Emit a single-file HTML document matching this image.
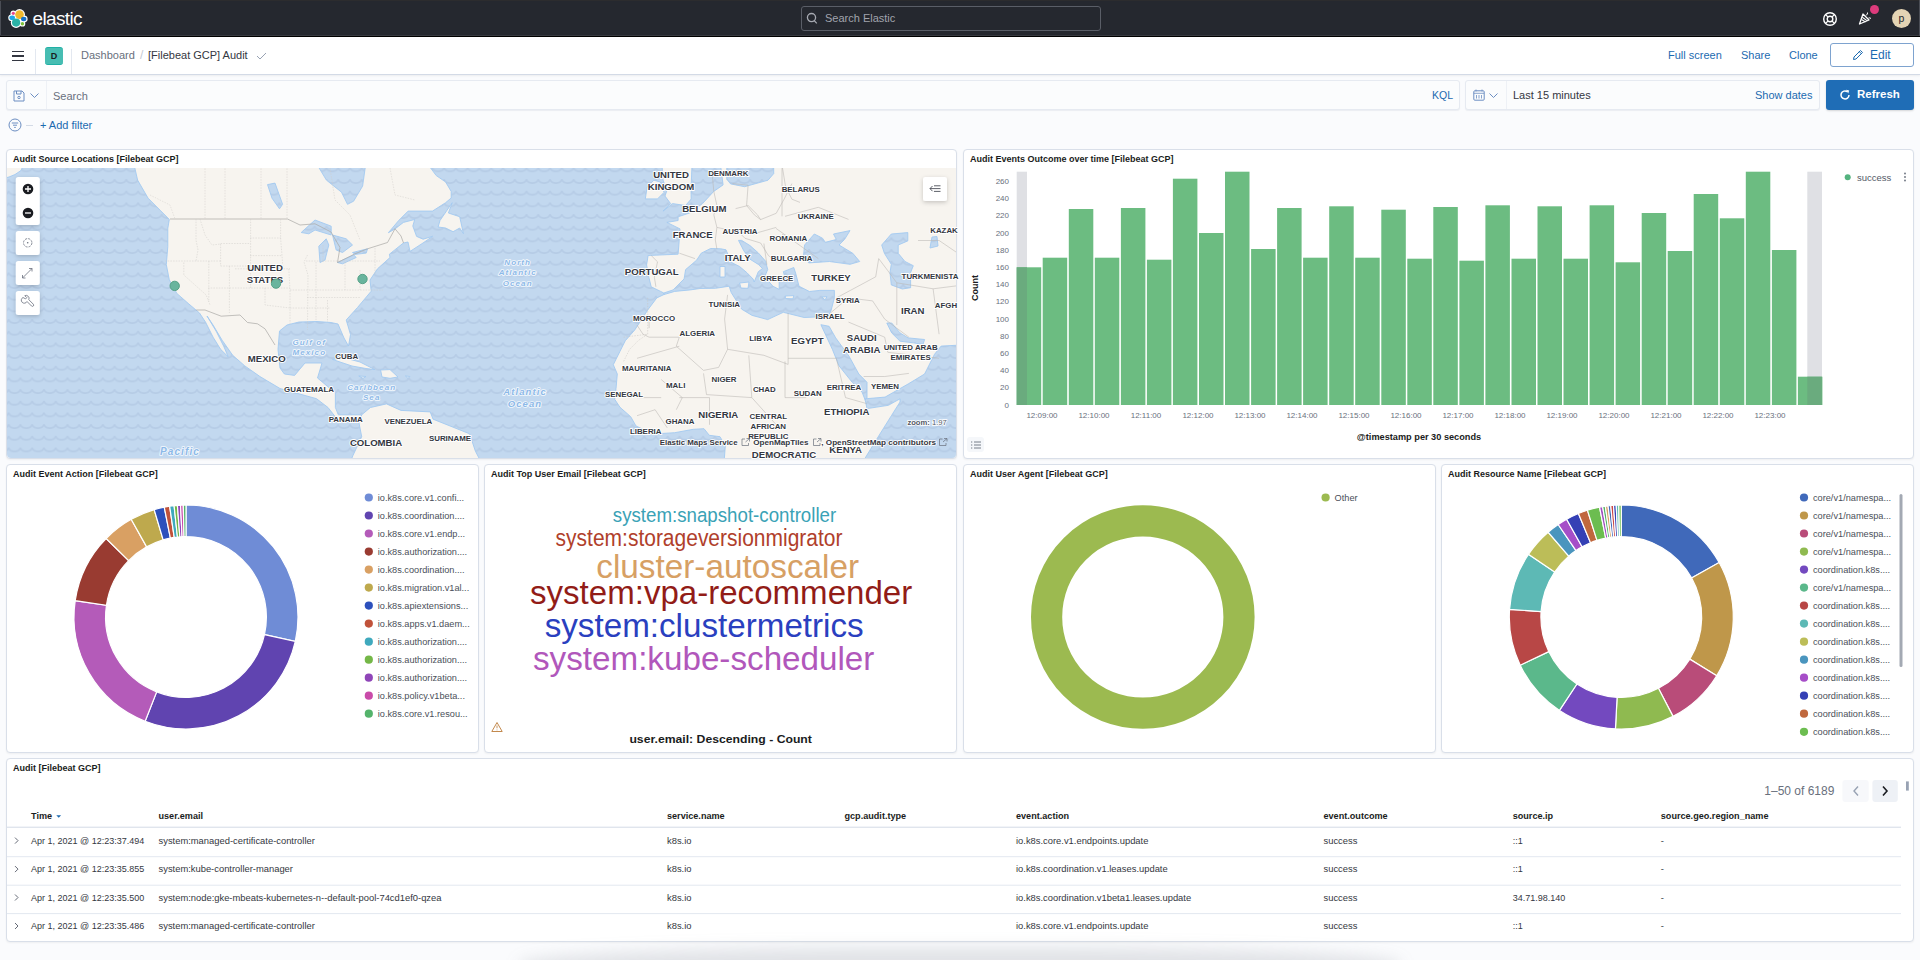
<!DOCTYPE html>
<html><head><meta charset="utf-8">
<style>
*{box-sizing:border-box;margin:0;padding:0}
html,body{width:1920px;height:960px;overflow:hidden;background:#fafbfd;font-family:"Liberation Sans",sans-serif;color:#343741;position:relative}
.abs{position:absolute}
.hdr{position:absolute;left:0;top:0;width:1920px;height:37px;background:#25282f;border-bottom:1px solid #000}
.nav{position:absolute;left:0;top:37px;width:1920px;height:38px;background:#fff;border-bottom:1px solid #d3dae6;box-shadow:0 1px 2px rgba(0,0,0,.06)}
.t{position:absolute;white-space:nowrap;line-height:1}
.link{color:#1c6ab0}
.panel{position:absolute;background:#fff;border:1px solid #d9dfe9;border-radius:4px;box-shadow:0 1px 2px rgba(0,0,0,.05)}
.ptitle{position:absolute;left:6px;top:5px;font-weight:bold;font-size:9px;color:#1a1c21;white-space:nowrap;line-height:1}
</style></head>
<body>
<!-- top header -->
<div class="hdr">
  <div class="abs" style="left:0;top:0;width:1px;height:36px;background:#4a4d55"></div>
  <div class="abs" style="left:0;top:0;width:1920px;height:1px;background:#2c2c2e"></div>
  <div class="abs" style="left:0;top:35px;width:1920px;height:1px;background:#383a40"></div>
  <svg class="abs" style="left:7px;top:7px" width="22" height="22" viewBox="0 0 22 22"><ellipse cx="12.5" cy="7.6" rx="5.5" ry="5.5" fill="#fff"/><ellipse cx="6.3" cy="6.3" rx="2.8" ry="2.8" fill="#fff"/><ellipse cx="5.2" cy="10.7" rx="4.0" ry="3.5" fill="#fff"/><ellipse cx="9.1" cy="15.6" rx="5.3" ry="5.3" fill="#fff"/><ellipse cx="16.7" cy="12.0" rx="3.9" ry="3.4" fill="#fff"/><ellipse cx="15.4" cy="16.7" rx="2.9" ry="2.9" fill="#fff"/><ellipse cx="12.5" cy="7.6" rx="4.3" ry="4.3" fill="#f0b92d"/><ellipse cx="6.3" cy="6.3" rx="1.6" ry="1.6" fill="#e8478b"/><ellipse cx="5.2" cy="10.7" rx="2.8" ry="2.3" fill="#1ea6e8"/><ellipse cx="9.1" cy="15.6" rx="4.1" ry="4.1" fill="#2bb3a6"/><ellipse cx="16.7" cy="12.0" rx="2.7" ry="2.2" fill="#1371c9"/><ellipse cx="15.4" cy="16.7" rx="1.7" ry="1.7" fill="#7bc038"/></svg>
  <div class="t" style="left:32.5px;top:9px;font-size:19px;color:#fff;letter-spacing:-0.65px">elastic</div>
  <div class="abs" style="left:801px;top:6px;width:300px;height:25px;border:1px solid #5a5e67;border-radius:3px;background:#25282f"></div>
  <svg class="abs" style="left:806px;top:12px" width="12" height="13" viewBox="0 0 12 13"><circle cx="5.5" cy="5.6" r="4.1" fill="none" stroke="#a7aab2" stroke-width="1.3"/><path d="M8.2 8.6 L10.8 11.4" stroke="#a7aab2" stroke-width="1.3"/></svg>
  <div class="t" style="left:825px;top:13px;font-size:11px;color:#a1a4ad">Search Elastic</div>
  <svg class="abs" style="left:1822px;top:11px" width="16" height="16" viewBox="0 0 16 16"><circle cx="8" cy="8" r="6.3" fill="none" stroke="#fff" stroke-width="1.4"/><circle cx="8" cy="8" r="2.8" fill="none" stroke="#fff" stroke-width="1.4"/><path d="M3.6 3.6L6 6M12.4 3.6L10 6M3.6 12.4L6 10M12.4 12.4L10 10" stroke="#fff" stroke-width="1.2"/></svg>
  <svg class="abs" style="left:1857px;top:10px" width="16" height="16" viewBox="0 0 16 16"><path d="M2.5 14 L6 4 L12 10 Z" fill="none" stroke="#fff" stroke-width="1.3" stroke-linejoin="round"/><path d="M4.5 9.5 L8.5 12 M5.3 7.2 L10 10.6" stroke="#fff" stroke-width="1.1"/><path d="M9 5.5 Q11 4 10.5 2.5 M11.5 8 Q13 7.5 14 8.5" fill="none" stroke="#fff" stroke-width="1"/></svg>
  <div class="abs" style="left:1870px;top:5px;width:9px;height:9px;border-radius:50%;background:#dd3b7c"></div>
  <div class="abs" style="left:1892px;top:9px;width:19px;height:19px;border-radius:50%;background:#e4d4b4;color:#25282f;font-size:10.5px;text-align:center;line-height:18px">p</div>
  <div class="abs" style="left:1919px;top:0;width:1px;height:36px;background:#4a4d55"></div>
</div>
<!-- nav -->
<div class="nav">
  <div class="abs" style="left:12px;top:14px;width:12px;height:1.3px;background:#343741"></div>
  <div class="abs" style="left:12px;top:18.3px;width:12px;height:1.3px;background:#343741"></div>
  <div class="abs" style="left:12px;top:22.6px;width:12px;height:1.3px;background:#343741"></div>
  <div class="abs" style="left:35px;top:12px;width:1px;height:25px;background:#e3e8f0"></div>
  <div class="abs" style="left:71px;top:12px;width:1px;height:25px;background:#e3e8f0"></div>
  <div class="abs" style="left:45px;top:9.5px;width:18px;height:18px;border-radius:3px;background:#47bdb2;border-top:1px solid #20b0a5;border-bottom:1px solid #20b0a5;color:#1a1c21;font-size:9px;font-weight:bold;text-align:center;line-height:16.5px">D</div>
  <div class="t" style="left:81px;top:13px;font-size:11px;color:#69707d">Dashboard</div>
  <div class="t" style="left:140px;top:12px;font-size:12px;color:#c2c8d2">/</div>
  <div class="t" style="left:148px;top:13px;font-size:11px;color:#343741">[Filebeat GCP] Audit</div>
  <svg class="abs" style="left:256px;top:15px" width="11" height="8" viewBox="0 0 11 8"><path d="M1 4 L4 7 L10 1" fill="none" stroke="#98a2b3" stroke-width="1"/></svg>
  <div class="t link" style="left:1668px;top:13px;font-size:11px">Full screen</div>
  <div class="t link" style="left:1741px;top:13px;font-size:11px">Share</div>
  <div class="t link" style="left:1789px;top:13px;font-size:11px">Clone</div>
  <div class="abs" style="left:1830px;top:6px;width:84px;height:24px;border:1px solid #7ea3cf;border-radius:3px;background:#fff"></div>
  <svg class="abs" style="left:1852px;top:12px" width="12" height="12" viewBox="0 0 12 12"><path d="M1.5 10.5 L2 8 L8.5 1.5 L10.5 3.5 L4 10 Z M7.3 2.7 L9.3 4.7" fill="none" stroke="#1c6ab0" stroke-width="1"/></svg>
  <div class="t link" style="left:1870px;top:12px;font-size:12px">Edit</div>
</div>
<!-- query bar -->
<div class="abs" style="left:6px;top:80px;width:1454px;height:30px;background:#fbfcfd;border:1px solid #e6eaf1;border-radius:3px;box-shadow:0 1px 1px rgba(152,162,179,.15)"></div>
<div class="abs" style="left:46px;top:81px;width:1px;height:28px;background:#eef1f6"></div>
<svg class="abs" style="left:13px;top:90px" width="12" height="12" viewBox="0 0 12 12"><path d="M1 1 H9 L11 3 V11 H1 Z" fill="none" stroke="#6c8ec2" stroke-width="1"/><path d="M3.5 1 V4 H8 V1" fill="none" stroke="#6c8ec2" stroke-width="1"/><circle cx="6" cy="7.5" r="1.2" fill="none" stroke="#6c8ec2" stroke-width="1"/></svg>
<svg class="abs" style="left:30px;top:93px" width="9" height="6" viewBox="0 0 9 6"><path d="M0.5 0.5 L4.5 4.5 L8.5 0.5" fill="none" stroke="#6c8ec2" stroke-width="1"/></svg>
<div class="t" style="left:53px;top:91px;font-size:11px;color:#69707d">Search</div>
<div class="t link" style="left:1432px;top:90px;font-size:10.5px">KQL</div>
<div class="abs" style="left:1465px;top:80px;width:355px;height:30px;background:#fbfcfd;border:1px solid #e6eaf1;border-radius:3px;box-shadow:0 1px 1px rgba(152,162,179,.15)"></div>
<div class="abs" style="left:1506px;top:81px;width:1px;height:28px;background:#eef1f6"></div>
<svg class="abs" style="left:1473px;top:89px" width="12" height="12" viewBox="0 0 12 12"><rect x="0.8" y="1.8" width="10.4" height="9.4" rx="1" fill="none" stroke="#6c8ec2" stroke-width="1"/><path d="M0.8 4.3 H11.2 M3 0.5 V2.5 M9 0.5 V2.5 M3.5 6 V9.5 M6 6 V9.5 M8.5 6 V9.5" stroke="#6c8ec2" stroke-width="0.8"/></svg>
<svg class="abs" style="left:1489px;top:93px" width="9" height="6" viewBox="0 0 9 6"><path d="M0.5 0.5 L4.5 4.5 L8.5 0.5" fill="none" stroke="#6c8ec2" stroke-width="1"/></svg>
<div class="t" style="left:1513px;top:90px;font-size:11px;color:#343741">Last 15 minutes</div>
<div class="t link" style="left:1755px;top:90px;font-size:11px">Show dates</div>
<div class="abs" style="left:1826px;top:80px;width:88px;height:30px;background:#1f6db6;border-radius:3px;box-shadow:0 1px 2px rgba(0,0,0,.15)"></div>
<svg class="abs" style="left:1839px;top:89px" width="12" height="12" viewBox="0 0 12 12"><path d="M10 6 A4 4 0 1 1 8.2 2.6" fill="none" stroke="#fff" stroke-width="1.5"/><path d="M7 0.8 L10.2 1.6 L9.2 4.6 Z" fill="#fff"/></svg>
<div class="t" style="left:1857px;top:89px;font-size:11.5px;font-weight:bold;color:#fff">Refresh</div>
<!-- filter row -->
<svg class="abs" style="left:8px;top:118px" width="14" height="14" viewBox="0 0 14 14"><circle cx="7" cy="7" r="6" fill="none" stroke="#6c8ec2" stroke-width="1"/><path d="M3.8 5 H10.2 M5 7.2 H9 M6.2 9.4 H7.8" stroke="#6c8ec2" stroke-width="1"/></svg>
<div class="abs" style="left:26px;top:125px;width:7px;height:1px;background:#d3dae6"></div>
<div class="t link" style="left:40px;top:120px;font-size:11px">+ Add filter</div>

<!-- panels -->
<div class="panel" style="left:6px;top:149px;width:951px;height:310px"><div class="ptitle">Audit Source Locations [Filebeat GCP]</div></div>
<div class="panel" style="left:963px;top:149px;width:951px;height:310px"><div class="ptitle">Audit Events Outcome over time [Filebeat GCP]</div></div>
<div class="panel" style="left:6px;top:464px;width:473px;height:289px"><div class="ptitle">Audit Event Action [Filebeat GCP]</div></div>
<div class="panel" style="left:484px;top:464px;width:473px;height:289px"><div class="ptitle">Audit Top User Email [Filebeat GCP]</div></div>
<div class="panel" style="left:963px;top:464px;width:473px;height:289px"><div class="ptitle">Audit User Agent [Filebeat GCP]</div></div>
<div class="panel" style="left:1441px;top:464px;width:473px;height:289px"><div class="ptitle">Audit Resource Name [Filebeat GCP]</div></div>
<div class="panel" style="left:6px;top:758px;width:1908px;height:183.5px"><div class="ptitle">Audit [Filebeat GCP]</div></div>
<svg class="abs" style="left:0;top:0" width="1920" height="960" viewBox="0 0 1920 960">
<defs>
<clipPath id="mapclip"><path d="M7 168 H956 V454 Q956 458 952 458 H11 Q7 458 7 454 Z"/></clipPath>
<pattern id="waves" patternUnits="userSpaceOnUse" x="8.65" y="166.45" width="11.77" height="11.67">
<rect width="11.77" height="11.67" fill="#c2d8ef"/>
<path d="M0 1.2 C1.5 6.2 10.27 6.2 11.77 1.2" fill="none" stroke="#b6cce6" stroke-width="1.7"/>
</pattern>
<filter id="sh" x="-30%" y="-30%" width="160%" height="160%"><feDropShadow dx="0" dy="1.5" stdDeviation="2.2" flood-color="#000" flood-opacity="0.2"/></filter>
</defs>
<g clip-path="url(#mapclip)">
<rect x="7" y="168" width="949" height="290" fill="url(#waves)"/>
<polygon points="134.5,166.5 137.6,180.1 148.1,198.2 160.2,210.3 169.3,219.4 167.8,228.4 167.8,246.5 166.3,264.7 169.3,279.8 176.8,293.4 188.9,304.0 199.5,313.0 205.5,322.1 213.1,337.2 220.6,349.3 228.2,356.8 223.7,346.2 216.1,331.1 207.0,316.0 213.1,325.1 222.1,340.2 232.7,355.3 244.8,365.9 259.9,376.5 280.0,388.5 316.5,398.7 328.0,407.5 338.3,420.6 358.8,422.0 361.7,414.8 338.3,414.8 335.4,407.5 335.4,392.9 317.5,378.0 322.0,363.0 305.0,363.0 294.6,375.4 284.4,374.0 280.0,368.0 278.0,349.3 279.5,331.0 287.0,325.0 299.0,322.0 317.0,321.5 331.0,322.5 338.0,324.0 344.0,338.0 348.5,346.0 350.5,334.6 348.0,326.0 346.2,320.0 357.5,307.5 371.2,291.2 370.0,280.0 377.5,268.8 390.0,257.5 389.4,254.2 403.4,243.0 408.0,242.0 410.0,251.4 423.0,243.0 432.5,236.4 423.1,239.2 416.6,236.4 412.8,226.1 414.7,219.5 403.4,222.4 395.0,228.9 388.4,232.7 398.7,220.5 408.1,211.1 432.5,211.1 445.6,202.7 451.2,198.0 451.2,191.4 445.6,182.0 436.2,175.5 426.9,163.0" fill="#f7f4ef" stroke="#a3c9f0" stroke-width="0.9" stroke-linejoin="round"/>
<polygon points="350.0,463.0 352.9,455.6 361.7,436.7 358.8,422.0 361.7,414.8 370.4,407.5 386.5,403.9 401.0,410.4 430.2,411.9 433.1,419.2 469.6,433.8 475.4,451.2 481.6,463.0" fill="#f7f4ef" stroke="#a3c9f0" stroke-width="0.9" stroke-linejoin="round"/>
<polygon points="438.1,227.0 440.0,220.5 452.2,202.7 448.4,213.0 459.7,216.7 463.4,233.6 459.7,228.0 453.1,231.7 445.6,228.0" fill="#f7f4ef" stroke="#a3c9f0" stroke-width="0.9" stroke-linejoin="round"/>
<polygon points="332.5,359.4 345.0,358.0 360.0,362.0 374.8,369.6 366.0,368.5 352.0,366.0 340.0,362.0" fill="#f7f4ef" stroke="#a3c9f0" stroke-width="0.9" stroke-linejoin="round"/>
<polygon points="380.6,370.0 390.0,369.6 398.0,377.0 390.0,378.3 382.0,377.0" fill="#f7f4ef" stroke="#a3c9f0" stroke-width="0.9" stroke-linejoin="round"/>
<polygon points="358.8,376.0 366.0,376.5 363.0,378.3" fill="#f7f4ef" stroke="#a3c9f0" stroke-width="0.9" stroke-linejoin="round"/>
<polygon points="405.4,376.0 409.8,376.5 408.0,378.3" fill="#f7f4ef" stroke="#a3c9f0" stroke-width="0.9" stroke-linejoin="round"/>
<polygon points="720.3,163.0 723.1,184.9 713.7,191.4 702.5,203.6 689.4,213.0 678.1,216.8 678.1,220.5 666.9,222.4 680.0,228.9 679.0,243.0 678.1,254.2 648.1,255.5 646.6,264.9 648.9,277.4 651.2,286.8 660.6,291.4 663.8,293.0 663.8,294.6 656.8,297.9 647.7,310.0 634.7,330.0 625.3,340.7 620.0,351.3 613.3,364.7 617.3,374.0 616.0,388.7 614.7,399.3 620.0,407.3 630.7,416.7 636.0,426.0 653.3,434.0 674.7,432.7 693.3,429.3 704.0,428.7 709.3,435.3 720.0,436.7 725.3,446.0 724.0,463.0 962.0,463.0 962.0,163.0 721.6,163.0" fill="#f7f4ef" stroke="#a3c9f0" stroke-width="0.9" stroke-linejoin="round"/>
<polygon points="662.0,165.0 692.0,165.0 691.0,190.0 691.2,199.0 685.6,205.5 672.5,203.6 663.1,211.1 670.6,203.6 665.0,196.1 666.9,190.5 663.0,180.0" fill="#f7f4ef" stroke="#a3c9f0" stroke-width="0.9" stroke-linejoin="round"/>
<polygon points="645.3,198.9 647.2,186.7 653.8,180.2 660.3,182.0 664.0,192.4 657.5,198.9" fill="#f7f4ef" stroke="#a3c9f0" stroke-width="0.9" stroke-linejoin="round"/>
<polygon points="5.0,166.0 23.0,166.0 21.0,170.5 15.0,174.5 9.0,177.0 5.0,178.0" fill="#f7f4ef" stroke="#a3c9f0" stroke-width="0.9" stroke-linejoin="round"/>
<polygon points="726.8,163.0 773.7,163.0 773.7,173.6 768.0,180.2 744.6,186.7 730.6,183.9 726.8,179.2" fill="url(#waves)" stroke="#a3c9f0" stroke-width="0.9" stroke-linejoin="round"/>
<polygon points="663.8,293.0 673.1,289.9 684.1,278.9 685.6,269.6 696.6,260.2 701.2,253.2 710.6,248.5 720.8,248.8 726.0,249.8 731.2,262.3 739.6,266.5 746.9,272.7 753.1,279.0 754.2,282.0 758.3,271.7 762.5,268.5 758.3,264.4 750.0,259.2 743.8,250.8 738.5,240.4 741.7,240.4 750.0,245.6 758.3,252.9 765.6,261.2 767.7,269.6 764.6,276.9 772.9,286.2 779.2,289.4 779.2,282.0 785.4,279.0 783.3,271.7 793.8,267.5 795.8,273.8 799.0,286.2 809.4,291.5 819.8,290.4 834.4,290.4 834.4,297.7 831.2,310.2 828.1,316.5 804.2,317.5 783.3,312.3 767.7,319.6 752.1,315.4 741.7,309.2 731.2,292.5 729.2,286.2 715.6,288.3 700.0,288.5 690.3,289.9 674.7,291.4 663.8,294.6" fill="url(#waves)" stroke="#a3c9f0" stroke-width="0.9" stroke-linejoin="round"/>
<polygon points="804.6,245.0 814.3,234.0 822.5,238.2 825.3,242.3 836.3,239.5 833.5,234.0 850.0,230.6 844.5,239.5 839.0,245.0 852.8,253.3 859.7,261.5 850.0,264.3 829.4,261.5 808.8,262.9 803.3,257.4" fill="url(#waves)" stroke="#a3c9f0" stroke-width="0.9" stroke-linejoin="round"/>
<polygon points="881.7,245.0 891.3,234.0 907.8,232.6 907.8,240.9 898.2,245.0 898.2,253.3 905.0,261.5 913.3,265.7 910.6,272.5 910.6,287.7 902.3,289.0 891.3,284.9 890.0,272.5 891.3,264.3 884.4,253.3" fill="url(#waves)" stroke="#a3c9f0" stroke-width="0.9" stroke-linejoin="round"/>
<polygon points="932.0,237.0 937.0,236.5 938.0,246.0 930.0,248.0 931.0,242.0" fill="url(#waves)" stroke="#a3c9f0" stroke-width="0.9" stroke-linejoin="round"/>
<polygon points="820.9,324.7 832.4,349.4 839.0,365.8 852.2,382.3 862.1,392.2 865.3,400.4 867.0,398.0 867.0,382.3 858.8,374.0 848.9,356.0 835.7,337.9 829.1,326.3" fill="url(#waves)" stroke="#a3c9f0" stroke-width="0.9" stroke-linejoin="round"/>
<polygon points="886.8,323.0 891.7,323.0 900.0,332.9 908.1,337.9 924.6,339.5 923.0,344.4 913.1,342.8 900.0,341.2 891.7,332.9" fill="url(#waves)" stroke="#a3c9f0" stroke-width="0.9" stroke-linejoin="round"/>
<polygon points="862.1,463.0 875.2,441.6 891.7,415.2 900.0,402.0 900.0,398.8 888.4,405.3 867.0,408.6 865.3,400.4 865.3,398.8 885.1,397.1 908.1,384.0 924.6,374.0 934.5,354.3 941.1,346.1 962.0,345.0 962.0,463.0" fill="url(#waves)" stroke="#a3c9f0" stroke-width="0.9" stroke-linejoin="round"/>
<polygon points="317.3,165.0 365.6,165.0 362.6,186.1 353.6,201.2 347.5,204.3 341.5,192.2 326.4,180.1" fill="url(#waves)" stroke="#a3c9f0" stroke-width="0.9" stroke-linejoin="round"/>
<polygon points="301.2,232.5 315.0,220.0 331.2,226.2 331.2,235.0 315.0,230.0 308.8,233.8" fill="url(#waves)" stroke="#a3c9f0" stroke-width="0.9" stroke-linejoin="round"/>
<polygon points="318.8,246.2 326.2,238.8 328.8,245.0 325.0,260.0 320.0,262.5" fill="url(#waves)" stroke="#a3c9f0" stroke-width="0.9" stroke-linejoin="round"/>
<polygon points="332.5,235.0 346.2,238.8 352.5,245.0 342.5,252.5 336.2,250.0" fill="url(#waves)" stroke="#a3c9f0" stroke-width="0.9" stroke-linejoin="round"/>
<polygon points="337.5,262.5 353.8,255.0 356.2,257.5 342.5,263.8" fill="url(#waves)" stroke="#a3c9f0" stroke-width="0.9" stroke-linejoin="round"/>
<polygon points="352.5,252.5 367.5,248.8 366.2,253.1 355.0,254.4" fill="url(#waves)" stroke="#a3c9f0" stroke-width="0.9" stroke-linejoin="round"/>
<polygon points="267.5,184.6 275.0,183.1 282.6,204.3 279.5,208.8 272.0,198.2" fill="url(#waves)" stroke="#a3c9f0" stroke-width="0.9" stroke-linejoin="round"/>
<polygon points="720.0,266.5 725.0,266.5 725.0,277.0 720.0,277.0" fill="#f7f4ef" stroke="#a3c9f0" stroke-width="0.9" stroke-linejoin="round"/>
<polygon points="739.6,283.0 749.0,282.0 748.0,288.3 741.0,288.0" fill="#f7f4ef" stroke="#a3c9f0" stroke-width="0.9" stroke-linejoin="round"/>
<polygon points="785.4,296.0 793.8,295.6 793.0,298.8 785.4,298.5" fill="#f7f4ef" stroke="#a3c9f0" stroke-width="0.9" stroke-linejoin="round"/>
<polygon points="821.9,297.0 827.0,296.7 825.0,299.8" fill="#f7f4ef" stroke="#a3c9f0" stroke-width="0.9" stroke-linejoin="round"/>
<polyline points="170.0,219.0 287.5,219.0 300.0,225.0 315.0,223.8 331.0,232.0 340.0,247.5 337.5,262.5 355.0,253.8 367.5,248.8 387.5,242.5 395.0,228.8 401.0,236.0 403.5,243.0" fill="none" stroke="#a9a7a5" stroke-width="0.70" />
<polyline points="196.2,310.0 205.0,310.0 221.2,316.2 240.0,315.0 247.5,322.5 257.5,323.8 265.0,328.8 275.0,345.0" fill="none" stroke="#a9a7a5" stroke-width="0.70" />
<polyline points="196.0,219.0 196.0,240.0 198.0,250.0 196.0,261.0" fill="none" stroke="#cfccc8" stroke-width="0.50" stroke-dasharray="1.5,1.2"/>
<polyline points="165.0,261.0 220.6,261.0" fill="none" stroke="#cfccc8" stroke-width="0.50" stroke-dasharray="1.5,1.2"/>
<polyline points="200.0,219.0 205.0,235.0 212.0,245.0 220.6,244.0" fill="none" stroke="#cfccc8" stroke-width="0.50" stroke-dasharray="1.5,1.2"/>
<polyline points="220.6,243.5 250.6,243.5" fill="none" stroke="#cfccc8" stroke-width="0.50" stroke-dasharray="1.5,1.2"/>
<polyline points="220.6,244.0 220.6,266.0" fill="none" stroke="#cfccc8" stroke-width="0.50" stroke-dasharray="1.5,1.2"/>
<polyline points="208.8,261.0 208.8,302.0" fill="none" stroke="#cfccc8" stroke-width="0.50" stroke-dasharray="1.5,1.2"/>
<polyline points="220.6,266.0 250.6,266.0" fill="none" stroke="#cfccc8" stroke-width="0.50" stroke-dasharray="1.5,1.2"/>
<polyline points="250.6,219.0 250.6,289.0" fill="none" stroke="#cfccc8" stroke-width="0.50" stroke-dasharray="1.5,1.2"/>
<polyline points="250.0,238.0 281.0,238.0" fill="none" stroke="#cfccc8" stroke-width="0.50" stroke-dasharray="1.5,1.2"/>
<polyline points="250.0,255.6 282.0,255.6" fill="none" stroke="#cfccc8" stroke-width="0.50" stroke-dasharray="1.5,1.2"/>
<polyline points="235.0,268.8 290.0,268.8" fill="none" stroke="#cfccc8" stroke-width="0.50" stroke-dasharray="1.5,1.2"/>
<polyline points="208.0,288.0 290.0,288.0" fill="none" stroke="#cfccc8" stroke-width="0.50" stroke-dasharray="1.5,1.2"/>
<polyline points="229.4,266.0 229.4,313.0" fill="none" stroke="#cfccc8" stroke-width="0.50" stroke-dasharray="1.5,1.2"/>
<polyline points="183.8,262.5 183.8,275.0 206.2,295.0 210.0,305.0" fill="none" stroke="#cfccc8" stroke-width="0.50" stroke-dasharray="1.5,1.2"/>
<polyline points="280.6,219.0 280.6,238.0 282.0,255.6 283.0,268.8" fill="none" stroke="#cfccc8" stroke-width="0.50" stroke-dasharray="1.5,1.2"/>
<polyline points="288.8,268.8 290.0,290.0 290.0,325.0" fill="none" stroke="#cfccc8" stroke-width="0.50" stroke-dasharray="1.5,1.2"/>
<polyline points="290.0,290.0 383.0,290.0" fill="none" stroke="#cfccc8" stroke-width="0.50" stroke-dasharray="1.5,1.2"/>
<polyline points="306.0,261.0 380.0,261.0" fill="none" stroke="#cfccc8" stroke-width="0.50" stroke-dasharray="1.5,1.2"/>
<polyline points="307.5,255.0 304.0,262.0 308.0,275.0 307.5,330.0" fill="none" stroke="#cfccc8" stroke-width="0.50" stroke-dasharray="1.5,1.2"/>
<polyline points="316.0,262.0 316.0,320.0" fill="none" stroke="#cfccc8" stroke-width="0.50" stroke-dasharray="1.5,1.2"/>
<polyline points="327.5,300.0 327.5,322.0" fill="none" stroke="#cfccc8" stroke-width="0.50" stroke-dasharray="1.5,1.2"/>
<polyline points="307.0,297.5 360.0,297.5" fill="none" stroke="#cfccc8" stroke-width="0.50" stroke-dasharray="1.5,1.2"/>
<polyline points="290.0,308.0 330.0,308.0" fill="none" stroke="#cfccc8" stroke-width="0.50" stroke-dasharray="1.5,1.2"/>
<polyline points="265.0,288.0 265.0,305.0 290.0,308.0" fill="none" stroke="#cfccc8" stroke-width="0.50" stroke-dasharray="1.5,1.2"/>
<polyline points="345.0,262.0 345.0,290.0" fill="none" stroke="#cfccc8" stroke-width="0.50" stroke-dasharray="1.5,1.2"/>
<polyline points="360.0,270.0 360.0,290.0" fill="none" stroke="#cfccc8" stroke-width="0.50" stroke-dasharray="1.5,1.2"/>
<polyline points="375.0,248.0 375.0,275.0" fill="none" stroke="#cfccc8" stroke-width="0.50" stroke-dasharray="1.5,1.2"/>
<polyline points="323.0,245.0 323.0,262.0" fill="none" stroke="#cfccc8" stroke-width="0.50" stroke-dasharray="1.5,1.2"/>
<polyline points="205.0,163.0 205.0,219.0" fill="none" stroke="#d2cfcb" stroke-width="0.50" stroke-dasharray="1.5,1.2"/>
<polyline points="225.0,163.0 225.0,219.0" fill="none" stroke="#d2cfcb" stroke-width="0.50" stroke-dasharray="1.5,1.2"/>
<polyline points="261.0,163.0 261.0,219.0" fill="none" stroke="#d2cfcb" stroke-width="0.50" stroke-dasharray="1.5,1.2"/>
<polyline points="287.0,163.0 287.0,219.0" fill="none" stroke="#d2cfcb" stroke-width="0.50" stroke-dasharray="1.5,1.2"/>
<polyline points="150.0,195.0 170.0,205.0 175.0,219.0" fill="none" stroke="#d2cfcb" stroke-width="0.50" stroke-dasharray="1.5,1.2"/>
<polyline points="330.0,168.0 335.0,200.0 350.0,215.0 360.0,240.0" fill="none" stroke="#d2cfcb" stroke-width="0.50" stroke-dasharray="1.5,1.2"/>
<polyline points="390.0,168.0 395.0,195.0 415.0,200.0" fill="none" stroke="#d2cfcb" stroke-width="0.50" stroke-dasharray="1.5,1.2"/>
<polyline points="712.2,174.2 713.8,191.4 716.9,205.5 713.8,214.9 716.9,227.4 715.3,239.9 716.9,249.2" fill="none" stroke="#b9b6b2" stroke-width="0.55" />
<polyline points="732.5,183.6 748.1,185.2 746.6,205.5 754.4,214.9 760.6,219.6 776.2,213.3 784.1,199.2 791.9,183.6" fill="none" stroke="#b9b6b2" stroke-width="0.55" />
<polyline points="735.6,208.6 748.1,205.5 757.5,214.9 760.6,219.6" fill="none" stroke="#b9b6b2" stroke-width="0.55" />
<polyline points="716.9,227.4 738.8,232.1 754.4,233.6 765.3,230.5 776.2,227.4" fill="none" stroke="#b9b6b2" stroke-width="0.55" />
<polyline points="738.8,232.1 745.0,238.3 760.6,243.0 768.4,255.5 776.2,261.8" fill="none" stroke="#b9b6b2" stroke-width="0.55" />
<polyline points="651.2,255.5 657.5,261.8 654.4,277.4 655.9,286.8" fill="none" stroke="#b9b6b2" stroke-width="0.55" />
<polyline points="679.4,253.2 695.0,258.6" fill="none" stroke="#b9b6b2" stroke-width="0.55" />
<polyline points="782.5,168.0 785.6,186.8 791.9,199.2 800.0,202.4" fill="none" stroke="#b9b6b2" stroke-width="0.55" />
<polyline points="643.0,334.2 649.1,337.2 679.3,337.2 676.3,346.2 703.5,370.4 718.6,367.4" fill="none" stroke="#b9b6b2" stroke-width="0.55" />
<polyline points="718.6,367.4 727.6,349.3 724.6,319.1 727.6,294.9" fill="none" stroke="#b9b6b2" stroke-width="0.55" />
<polyline points="727.6,349.3 763.9,355.3 788.1,364.4 788.1,313.0" fill="none" stroke="#b9b6b2" stroke-width="0.55" />
<polyline points="788.1,358.3 836.4,358.3" fill="none" stroke="#b9b6b2" stroke-width="0.55" />
<polyline points="748.8,355.3 751.8,397.6 779.0,427.8" fill="none" stroke="#b9b6b2" stroke-width="0.55" />
<polyline points="703.5,373.4 706.5,394.6 751.8,397.6" fill="none" stroke="#b9b6b2" stroke-width="0.55" />
<polyline points="785.0,361.4 785.0,397.6 806.2,397.6" fill="none" stroke="#b9b6b2" stroke-width="0.55" />
<polyline points="836.4,358.3 845.5,397.6 866.6,403.6" fill="none" stroke="#b9b6b2" stroke-width="0.55" />
<polyline points="830.4,313.0 848.5,297.9 872.6,300.9 884.7,319.1 908.9,337.2" fill="none" stroke="#b9b6b2" stroke-width="0.55" />
<polyline points="836.4,297.9 875.7,276.8 878.7,258.6" fill="none" stroke="#b9b6b2" stroke-width="0.55" />
<polyline points="878.7,258.6 887.8,270.7 896.8,282.8 933.1,288.8 956.9,285.8" fill="none" stroke="#b9b6b2" stroke-width="0.55" />
<polyline points="896.8,282.8 896.8,325.1" fill="none" stroke="#b9b6b2" stroke-width="0.55" />
<polyline points="933.1,288.8 939.1,334.2" fill="none" stroke="#b9b6b2" stroke-width="0.55" />
<polyline points="848.5,322.1 884.7,337.2 887.8,352.3 939.1,358.3" fill="none" stroke="#b9b6b2" stroke-width="0.55" />
<polyline points="863.6,376.5 884.7,376.5 908.9,373.4" fill="none" stroke="#b9b6b2" stroke-width="0.55" />
<polyline points="918.0,240.5 939.1,240.5 956.9,252.6" fill="none" stroke="#b9b6b2" stroke-width="0.55" />
<polyline points="785.0,216.3 818.3,207.3 848.5,219.4" fill="none" stroke="#b9b6b2" stroke-width="0.55" />
<polyline points="782.0,168.0 782.0,216.3" fill="none" stroke="#b9b6b2" stroke-width="0.55" />
<polyline points="776.0,228.4 818.3,258.6" fill="none" stroke="#b9b6b2" stroke-width="0.55" />
<polyline points="763.9,243.5 766.9,264.7" fill="none" stroke="#b9b6b2" stroke-width="0.55" />
<polyline points="782.0,234.5 806.2,240.5" fill="none" stroke="#b9b6b2" stroke-width="0.55" />
<polyline points="661.2,379.5 682.3,397.6 676.3,409.7" fill="none" stroke="#b9b6b2" stroke-width="0.55" />
<polyline points="679.3,397.6 709.5,397.6 709.5,424.8" fill="none" stroke="#b9b6b2" stroke-width="0.55" />
<polyline points="637.0,397.6 661.2,397.6" fill="none" stroke="#b9b6b2" stroke-width="0.55" />
<polyline points="637.0,358.3 679.3,346.2" fill="none" stroke="#b9b6b2" stroke-width="0.55" />
<polyline points="649.1,316.0 649.1,328.1" fill="none" stroke="#b9b6b2" stroke-width="0.55" />
<polyline points="637.0,325.1 643.0,334.2" fill="none" stroke="#b9b6b2" stroke-width="0.55" />
<polyline points="637.0,415.7 655.1,409.7 667.2,427.8" fill="none" stroke="#b9b6b2" stroke-width="0.55" />
<polyline points="623.6,361.4 629.6,349.3 638.7,340.2 647.7,334.2" fill="none" stroke="#c8c5c1" stroke-width="0.50" stroke-dasharray="1.5,1.2"/>
<polyline points="623.6,337.2 647.7,334.2 647.7,297.9" fill="none" stroke="#c8c5c1" stroke-width="0.50" stroke-dasharray="1.5,1.2"/>
</g>
<text x="265.0" y="271.1" font-size="9.6" font-family="Liberation Sans" font-weight="bold" fill="#343741" stroke="#fff" stroke-width="1.8" paint-order="stroke" stroke-linejoin="round" text-anchor="middle">UNITED</text>
<text x="265.0" y="282.7" font-size="9.6" font-family="Liberation Sans" font-weight="bold" fill="#343741" stroke="#fff" stroke-width="1.8" paint-order="stroke" stroke-linejoin="round" text-anchor="middle">STATES</text>
<text x="266.7" y="361.7" font-size="9.6" font-family="Liberation Sans" font-weight="bold" fill="#343741" stroke="#fff" stroke-width="1.8" paint-order="stroke" stroke-linejoin="round" text-anchor="middle">MEXICO</text>
<text x="376.0" y="446.1" font-size="9.6" font-family="Liberation Sans" font-weight="bold" fill="#343741" stroke="#fff" stroke-width="1.8" paint-order="stroke" stroke-linejoin="round" text-anchor="middle">COLOMBIA</text>
<text x="671.0" y="177.7" font-size="9.6" font-family="Liberation Sans" font-weight="bold" fill="#343741" stroke="#fff" stroke-width="1.8" paint-order="stroke" stroke-linejoin="round" text-anchor="middle">UNITED</text>
<text x="671.0" y="190.1" font-size="9.6" font-family="Liberation Sans" font-weight="bold" fill="#343741" stroke="#fff" stroke-width="1.8" paint-order="stroke" stroke-linejoin="round" text-anchor="middle">KINGDOM</text>
<text x="704.3" y="212.1" font-size="9.6" font-family="Liberation Sans" font-weight="bold" fill="#343741" stroke="#fff" stroke-width="1.8" paint-order="stroke" stroke-linejoin="round" text-anchor="middle">BELGIUM</text>
<text x="692.7" y="237.7" font-size="9.6" font-family="Liberation Sans" font-weight="bold" fill="#343741" stroke="#fff" stroke-width="1.8" paint-order="stroke" stroke-linejoin="round" text-anchor="middle">FRANCE</text>
<text x="737.7" y="260.7" font-size="9.6" font-family="Liberation Sans" font-weight="bold" fill="#343741" stroke="#fff" stroke-width="1.8" paint-order="stroke" stroke-linejoin="round" text-anchor="middle">ITALY</text>
<text x="651.7" y="275.4" font-size="9.6" font-family="Liberation Sans" font-weight="bold" fill="#343741" stroke="#fff" stroke-width="1.8" paint-order="stroke" stroke-linejoin="round" text-anchor="middle">PORTUGAL</text>
<text x="831.0" y="281.1" font-size="9.6" font-family="Liberation Sans" font-weight="bold" fill="#343741" stroke="#fff" stroke-width="1.8" paint-order="stroke" stroke-linejoin="round" text-anchor="middle">TURKEY</text>
<text x="912.7" y="313.7" font-size="9.6" font-family="Liberation Sans" font-weight="bold" fill="#343741" stroke="#fff" stroke-width="1.8" paint-order="stroke" stroke-linejoin="round" text-anchor="middle">IRAN</text>
<text x="807.3" y="344.4" font-size="9.6" font-family="Liberation Sans" font-weight="bold" fill="#343741" stroke="#fff" stroke-width="1.8" paint-order="stroke" stroke-linejoin="round" text-anchor="middle">EGYPT</text>
<text x="861.7" y="341.4" font-size="9.6" font-family="Liberation Sans" font-weight="bold" fill="#343741" stroke="#fff" stroke-width="1.8" paint-order="stroke" stroke-linejoin="round" text-anchor="middle">SAUDI</text>
<text x="861.7" y="353.4" font-size="9.6" font-family="Liberation Sans" font-weight="bold" fill="#343741" stroke="#fff" stroke-width="1.8" paint-order="stroke" stroke-linejoin="round" text-anchor="middle">ARABIA</text>
<text x="718.3" y="418.4" font-size="9.6" font-family="Liberation Sans" font-weight="bold" fill="#343741" stroke="#fff" stroke-width="1.8" paint-order="stroke" stroke-linejoin="round" text-anchor="middle">NIGERIA</text>
<text x="846.7" y="415.4" font-size="9.6" font-family="Liberation Sans" font-weight="bold" fill="#343741" stroke="#fff" stroke-width="1.8" paint-order="stroke" stroke-linejoin="round" text-anchor="middle">ETHIOPIA</text>
<text x="845.7" y="452.7" font-size="9.6" font-family="Liberation Sans" font-weight="bold" fill="#343741" stroke="#fff" stroke-width="1.8" paint-order="stroke" stroke-linejoin="round" text-anchor="middle">KENYA</text>
<text x="784.0" y="457.7" font-size="9.6" font-family="Liberation Sans" font-weight="bold" fill="#343741" stroke="#fff" stroke-width="1.8" paint-order="stroke" stroke-linejoin="round" text-anchor="middle">DEMOCRATIC</text>
<text x="346.7" y="358.9" font-size="7.9" font-family="Liberation Sans" font-weight="bold" fill="#343741" stroke="#fff" stroke-width="1.8" paint-order="stroke" stroke-linejoin="round" text-anchor="middle">CUBA</text>
<text x="309.0" y="391.6" font-size="7.9" font-family="Liberation Sans" font-weight="bold" fill="#343741" stroke="#fff" stroke-width="1.8" paint-order="stroke" stroke-linejoin="round" text-anchor="middle">GUATEMALA</text>
<text x="345.7" y="421.6" font-size="7.9" font-family="Liberation Sans" font-weight="bold" fill="#343741" stroke="#fff" stroke-width="1.8" paint-order="stroke" stroke-linejoin="round" text-anchor="middle">PANAMA</text>
<text x="408.3" y="423.9" font-size="7.9" font-family="Liberation Sans" font-weight="bold" fill="#343741" stroke="#fff" stroke-width="1.8" paint-order="stroke" stroke-linejoin="round" text-anchor="middle">VENEZUELA</text>
<text x="450.0" y="440.6" font-size="7.9" font-family="Liberation Sans" font-weight="bold" fill="#343741" stroke="#fff" stroke-width="1.8" paint-order="stroke" stroke-linejoin="round" text-anchor="middle">SURINAME</text>
<text x="728.3" y="176.2" font-size="7.9" font-family="Liberation Sans" font-weight="bold" fill="#343741" stroke="#fff" stroke-width="1.8" paint-order="stroke" stroke-linejoin="round" text-anchor="middle">DENMARK</text>
<text x="800.7" y="192.2" font-size="7.9" font-family="Liberation Sans" font-weight="bold" fill="#343741" stroke="#fff" stroke-width="1.8" paint-order="stroke" stroke-linejoin="round" text-anchor="middle">BELARUS</text>
<text x="815.7" y="218.9" font-size="7.9" font-family="Liberation Sans" font-weight="bold" fill="#343741" stroke="#fff" stroke-width="1.8" paint-order="stroke" stroke-linejoin="round" text-anchor="middle">UKRAINE</text>
<text x="944.0" y="232.9" font-size="7.9" font-family="Liberation Sans" font-weight="bold" fill="#343741" stroke="#fff" stroke-width="1.8" paint-order="stroke" stroke-linejoin="round" text-anchor="middle">KAZAK</text>
<text x="740.0" y="233.6" font-size="7.9" font-family="Liberation Sans" font-weight="bold" fill="#343741" stroke="#fff" stroke-width="1.8" paint-order="stroke" stroke-linejoin="round" text-anchor="middle">AUSTRIA</text>
<text x="788.3" y="241.2" font-size="7.9" font-family="Liberation Sans" font-weight="bold" fill="#343741" stroke="#fff" stroke-width="1.8" paint-order="stroke" stroke-linejoin="round" text-anchor="middle">ROMANIA</text>
<text x="791.7" y="260.6" font-size="7.9" font-family="Liberation Sans" font-weight="bold" fill="#343741" stroke="#fff" stroke-width="1.8" paint-order="stroke" stroke-linejoin="round" text-anchor="middle">BULGARIA</text>
<text x="776.7" y="280.6" font-size="7.9" font-family="Liberation Sans" font-weight="bold" fill="#343741" stroke="#fff" stroke-width="1.8" paint-order="stroke" stroke-linejoin="round" text-anchor="middle">GREECE</text>
<text x="930.0" y="278.9" font-size="7.9" font-family="Liberation Sans" font-weight="bold" fill="#343741" stroke="#fff" stroke-width="1.8" paint-order="stroke" stroke-linejoin="round" text-anchor="middle">TURKMENISTA</text>
<text x="724.3" y="307.2" font-size="7.9" font-family="Liberation Sans" font-weight="bold" fill="#343741" stroke="#fff" stroke-width="1.8" paint-order="stroke" stroke-linejoin="round" text-anchor="middle">TUNISIA</text>
<text x="847.7" y="303.2" font-size="7.9" font-family="Liberation Sans" font-weight="bold" fill="#343741" stroke="#fff" stroke-width="1.8" paint-order="stroke" stroke-linejoin="round" text-anchor="middle">SYRIA</text>
<text x="946.0" y="307.6" font-size="7.9" font-family="Liberation Sans" font-weight="bold" fill="#343741" stroke="#fff" stroke-width="1.8" paint-order="stroke" stroke-linejoin="round" text-anchor="middle">AFGH</text>
<text x="654.0" y="320.6" font-size="7.9" font-family="Liberation Sans" font-weight="bold" fill="#343741" stroke="#fff" stroke-width="1.8" paint-order="stroke" stroke-linejoin="round" text-anchor="middle">MOROCCO</text>
<text x="830.0" y="318.6" font-size="7.9" font-family="Liberation Sans" font-weight="bold" fill="#343741" stroke="#fff" stroke-width="1.8" paint-order="stroke" stroke-linejoin="round" text-anchor="middle">ISRAEL</text>
<text x="697.3" y="335.6" font-size="7.9" font-family="Liberation Sans" font-weight="bold" fill="#343741" stroke="#fff" stroke-width="1.8" paint-order="stroke" stroke-linejoin="round" text-anchor="middle">ALGERIA</text>
<text x="760.7" y="341.2" font-size="7.9" font-family="Liberation Sans" font-weight="bold" fill="#343741" stroke="#fff" stroke-width="1.8" paint-order="stroke" stroke-linejoin="round" text-anchor="middle">LIBYA</text>
<text x="910.7" y="349.6" font-size="7.9" font-family="Liberation Sans" font-weight="bold" fill="#343741" stroke="#fff" stroke-width="1.8" paint-order="stroke" stroke-linejoin="round" text-anchor="middle">UNITED ARAB</text>
<text x="910.7" y="359.6" font-size="7.9" font-family="Liberation Sans" font-weight="bold" fill="#343741" stroke="#fff" stroke-width="1.8" paint-order="stroke" stroke-linejoin="round" text-anchor="middle">EMIRATES</text>
<text x="646.7" y="371.2" font-size="7.9" font-family="Liberation Sans" font-weight="bold" fill="#343741" stroke="#fff" stroke-width="1.8" paint-order="stroke" stroke-linejoin="round" text-anchor="middle">MAURITANIA</text>
<text x="724.0" y="382.2" font-size="7.9" font-family="Liberation Sans" font-weight="bold" fill="#343741" stroke="#fff" stroke-width="1.8" paint-order="stroke" stroke-linejoin="round" text-anchor="middle">NIGER</text>
<text x="675.7" y="388.2" font-size="7.9" font-family="Liberation Sans" font-weight="bold" fill="#343741" stroke="#fff" stroke-width="1.8" paint-order="stroke" stroke-linejoin="round" text-anchor="middle">MALI</text>
<text x="764.3" y="391.6" font-size="7.9" font-family="Liberation Sans" font-weight="bold" fill="#343741" stroke="#fff" stroke-width="1.8" paint-order="stroke" stroke-linejoin="round" text-anchor="middle">CHAD</text>
<text x="844.0" y="390.2" font-size="7.9" font-family="Liberation Sans" font-weight="bold" fill="#343741" stroke="#fff" stroke-width="1.8" paint-order="stroke" stroke-linejoin="round" text-anchor="middle">ERITREA</text>
<text x="885.0" y="388.6" font-size="7.9" font-family="Liberation Sans" font-weight="bold" fill="#343741" stroke="#fff" stroke-width="1.8" paint-order="stroke" stroke-linejoin="round" text-anchor="middle">YEMEN</text>
<text x="624.0" y="396.6" font-size="7.9" font-family="Liberation Sans" font-weight="bold" fill="#343741" stroke="#fff" stroke-width="1.8" paint-order="stroke" stroke-linejoin="round" text-anchor="middle">SENEGAL</text>
<text x="807.7" y="396.2" font-size="7.9" font-family="Liberation Sans" font-weight="bold" fill="#343741" stroke="#fff" stroke-width="1.8" paint-order="stroke" stroke-linejoin="round" text-anchor="middle">SUDAN</text>
<text x="768.3" y="418.6" font-size="7.9" font-family="Liberation Sans" font-weight="bold" fill="#343741" stroke="#fff" stroke-width="1.8" paint-order="stroke" stroke-linejoin="round" text-anchor="middle">CENTRAL</text>
<text x="768.3" y="428.6" font-size="7.9" font-family="Liberation Sans" font-weight="bold" fill="#343741" stroke="#fff" stroke-width="1.8" paint-order="stroke" stroke-linejoin="round" text-anchor="middle">AFRICAN</text>
<text x="768.3" y="438.6" font-size="7.9" font-family="Liberation Sans" font-weight="bold" fill="#343741" stroke="#fff" stroke-width="1.8" paint-order="stroke" stroke-linejoin="round" text-anchor="middle">REPUBLIC</text>
<text x="680.0" y="423.9" font-size="7.9" font-family="Liberation Sans" font-weight="bold" fill="#343741" stroke="#fff" stroke-width="1.8" paint-order="stroke" stroke-linejoin="round" text-anchor="middle">GHANA</text>
<text x="645.7" y="433.6" font-size="7.9" font-family="Liberation Sans" font-weight="bold" fill="#343741" stroke="#fff" stroke-width="1.8" paint-order="stroke" stroke-linejoin="round" text-anchor="middle">LIBERIA</text>
<text x="309.3" y="344.7" font-size="8.0" font-family="Liberation Sans" font-style="italic" font-weight="bold" fill="#8cb9e8" stroke="#f4f8fd" stroke-width="1.7" paint-order="stroke" stroke-linejoin="round" text-anchor="middle" letter-spacing="1.1">Gulf of</text>
<text x="309.3" y="354.7" font-size="8.0" font-family="Liberation Sans" font-style="italic" font-weight="bold" fill="#8cb9e8" stroke="#f4f8fd" stroke-width="1.7" paint-order="stroke" stroke-linejoin="round" text-anchor="middle" letter-spacing="1.1">Mexico</text>
<text x="371.7" y="389.7" font-size="8.0" font-family="Liberation Sans" font-style="italic" font-weight="bold" fill="#8cb9e8" stroke="#f4f8fd" stroke-width="1.7" paint-order="stroke" stroke-linejoin="round" text-anchor="middle" letter-spacing="1.1">Caribbean</text>
<text x="371.7" y="399.7" font-size="8.0" font-family="Liberation Sans" font-style="italic" font-weight="bold" fill="#8cb9e8" stroke="#f4f8fd" stroke-width="1.7" paint-order="stroke" stroke-linejoin="round" text-anchor="middle" letter-spacing="1.1">Sea</text>
<text x="517.7" y="264.7" font-size="8.0" font-family="Liberation Sans" font-style="italic" font-weight="bold" fill="#8cb9e8" stroke="#f4f8fd" stroke-width="1.7" paint-order="stroke" stroke-linejoin="round" text-anchor="middle" letter-spacing="1.1">North</text>
<text x="517.7" y="275.3" font-size="8.0" font-family="Liberation Sans" font-style="italic" font-weight="bold" fill="#8cb9e8" stroke="#f4f8fd" stroke-width="1.7" paint-order="stroke" stroke-linejoin="round" text-anchor="middle" letter-spacing="1.1">Atlantic</text>
<text x="517.7" y="285.7" font-size="8.0" font-family="Liberation Sans" font-style="italic" font-weight="bold" fill="#8cb9e8" stroke="#f4f8fd" stroke-width="1.7" paint-order="stroke" stroke-linejoin="round" text-anchor="middle" letter-spacing="1.1">Ocean</text>
<text x="525.0" y="394.7" font-size="9.5" font-family="Liberation Sans" font-style="italic" font-weight="bold" fill="#8cb9e8" stroke="#f4f8fd" stroke-width="1.7" paint-order="stroke" stroke-linejoin="round" text-anchor="middle" letter-spacing="1.1">Atlantic</text>
<text x="525.0" y="407.3" font-size="9.5" font-family="Liberation Sans" font-style="italic" font-weight="bold" fill="#8cb9e8" stroke="#f4f8fd" stroke-width="1.7" paint-order="stroke" stroke-linejoin="round" text-anchor="middle" letter-spacing="1.1">Ocean</text>
<text x="180.0" y="454.7" font-size="10.0" font-family="Liberation Sans" font-style="italic" font-weight="bold" fill="#8cb9e8" stroke="#f4f8fd" stroke-width="1.7" paint-order="stroke" stroke-linejoin="round" text-anchor="middle" letter-spacing="1.1">Pacific</text>
<circle cx="174.7" cy="285.9" r="4.7" fill="#69b49d" stroke="#4f9d81" stroke-width="0.9"/>
<circle cx="276.0" cy="283.6" r="4.7" fill="#69b49d" stroke="#4f9d81" stroke-width="0.9"/>
<circle cx="362.5" cy="279.0" r="4.7" fill="#69b49d" stroke="#4f9d81" stroke-width="0.9"/>
<text x="946.7" y="425" font-size="7.6" font-family="Liberation Sans" text-anchor="end" fill="#535966" stroke="#fff" stroke-width="1.6" paint-order="stroke"><tspan font-weight="bold">zoom:</tspan> 1.97</text>
<text x="659.7" y="444.6" font-size="7.9" font-weight="bold" font-family="Liberation Sans" fill="#343741" stroke="#fff" stroke-width="1.6" paint-order="stroke" lengthAdjust="spacingAndGlyphs" textLength="77.9">Elastic Maps Service</text>
<text x="753.3" y="444.6" font-size="7.9" font-weight="bold" font-family="Liberation Sans" fill="#343741" stroke="#fff" stroke-width="1.6" paint-order="stroke" lengthAdjust="spacingAndGlyphs" textLength="55.3">OpenMapTiles</text>
<text x="821.3" y="444.6" font-size="7.9" font-weight="bold" font-family="Liberation Sans" fill="#343741" stroke="#fff" stroke-width="1.6" paint-order="stroke" lengthAdjust="spacingAndGlyphs" textLength="114.8">, OpenStreetMap contributors</text>
<path d="M745.0 439 H742.0 V445.5 H748.5 V443 M746.5 438.5 H749.5 V441.5 M749.5 438.5 L745.5 442" fill="none" stroke="#69707d" stroke-width="0.7"/>
<path d="M816.5 439 H813.5 V445.5 H820.0 V443 M818.0 438.5 H821.0 V441.5 M821.0 438.5 L817.0 442" fill="none" stroke="#69707d" stroke-width="0.7"/>
<path d="M942.5 439 H939.5 V445.5 H946.0 V443 M944.0 438.5 H947.0 V441.5 M947.0 438.5 L943.0 442" fill="none" stroke="#69707d" stroke-width="0.7"/>
<rect x="15.8" y="177.0" width="24.0" height="48.0" rx="2.5" fill="#fff" filter="url(#sh)"/>
<rect x="15.8" y="231.0" width="24.0" height="24.0" rx="2.5" fill="#fff" filter="url(#sh)"/>
<rect x="15.8" y="261.0" width="24.0" height="24.0" rx="2.5" fill="#fff" filter="url(#sh)"/>
<rect x="15.8" y="291.0" width="24.0" height="24.0" rx="2.5" fill="#fff" filter="url(#sh)"/>
<rect x="923.0" y="177.0" width="24.0" height="24.0" rx="2.5" fill="#fff" filter="url(#sh)"/>
<circle cx="28" cy="189" r="5.3" fill="#1a1c21"/><path d="M25 189H31M28 186V192" stroke="#fff" stroke-width="1.3"/>
<circle cx="28" cy="213" r="5.3" fill="#1a1c21"/><path d="M25 213H31" stroke="#fff" stroke-width="1.3"/>
<circle cx="27.7" cy="242.8" r="4.2" fill="none" stroke="#69707d" stroke-width="0.8" stroke-dasharray="2.2,1.1"/><circle cx="27.7" cy="242.8" r="0.8" fill="#69707d"/>
<path d="M22.5 278 L32 268.5 M22.5 278 V275 M22.5 278 H25.5 M32 268.5 H29 M32 268.5 V271.5" fill="none" stroke="#69707d" stroke-width="0.8"/>
<path d="M23 297.5 a3 3 0 1 0 4 4 l4.5 4.5 a1.2 1.2 0 0 0 1.8 -1.8 l-4.5 -4.5 a3 3 0 0 0 -4 -4 l2 2 -1.2 1.2 z" fill="none" stroke="#69707d" stroke-width="0.8"/>
<path d="M932.5 186 L930 188.6 L932.5 191.2 M930 188.6 H940.5 M934 185.8 H940.5 M934 191.4 H940.5" fill="none" stroke="#343741" stroke-width="0.8"/>
</svg>
<svg class="abs" style="left:0;top:0" width="1920" height="960" viewBox="0 0 1920 960">
<rect x="1016.7" y="171.7" width="10.3" height="233.3" fill="#dfe0e4"/>
<rect x="1807.3" y="171.7" width="14.7" height="233.3" fill="#dfe0e4"/>
<rect x="1016.7" y="267.3" width="24.5" height="137.7" fill="#6cbc81"/>
<rect x="1042.7" y="257.7" width="24.5" height="147.3" fill="#6cbc81"/>
<rect x="1068.8" y="209.0" width="24.5" height="196.0" fill="#6cbc81"/>
<rect x="1094.8" y="257.7" width="24.5" height="147.3" fill="#6cbc81"/>
<rect x="1120.9" y="208.0" width="24.5" height="197.0" fill="#6cbc81"/>
<rect x="1146.9" y="259.7" width="24.5" height="145.3" fill="#6cbc81"/>
<rect x="1172.9" y="178.7" width="24.5" height="226.3" fill="#6cbc81"/>
<rect x="1199.0" y="233.0" width="24.5" height="172.0" fill="#6cbc81"/>
<rect x="1225.0" y="171.7" width="24.5" height="233.3" fill="#6cbc81"/>
<rect x="1251.1" y="249.0" width="24.5" height="156.0" fill="#6cbc81"/>
<rect x="1277.1" y="208.0" width="24.5" height="197.0" fill="#6cbc81"/>
<rect x="1303.1" y="257.7" width="24.5" height="147.3" fill="#6cbc81"/>
<rect x="1329.2" y="206.3" width="24.5" height="198.7" fill="#6cbc81"/>
<rect x="1355.2" y="257.7" width="24.5" height="147.3" fill="#6cbc81"/>
<rect x="1381.3" y="209.7" width="24.5" height="195.3" fill="#6cbc81"/>
<rect x="1407.3" y="258.7" width="24.5" height="146.3" fill="#6cbc81"/>
<rect x="1433.3" y="207.0" width="24.5" height="198.0" fill="#6cbc81"/>
<rect x="1459.4" y="260.7" width="24.5" height="144.3" fill="#6cbc81"/>
<rect x="1485.4" y="205.3" width="24.5" height="199.7" fill="#6cbc81"/>
<rect x="1511.5" y="258.7" width="24.5" height="146.3" fill="#6cbc81"/>
<rect x="1537.5" y="206.3" width="24.5" height="198.7" fill="#6cbc81"/>
<rect x="1563.5" y="258.7" width="24.5" height="146.3" fill="#6cbc81"/>
<rect x="1589.6" y="205.3" width="24.5" height="199.7" fill="#6cbc81"/>
<rect x="1615.6" y="262.3" width="24.5" height="142.7" fill="#6cbc81"/>
<rect x="1641.7" y="213.0" width="24.5" height="192.0" fill="#6cbc81"/>
<rect x="1667.7" y="251.0" width="24.5" height="154.0" fill="#6cbc81"/>
<rect x="1693.7" y="194.0" width="24.5" height="211.0" fill="#6cbc81"/>
<rect x="1719.8" y="218.3" width="24.5" height="186.7" fill="#6cbc81"/>
<rect x="1745.8" y="171.7" width="24.5" height="233.3" fill="#6cbc81"/>
<rect x="1771.9" y="250.0" width="24.5" height="155.0" fill="#6cbc81"/>
<rect x="1797.9" y="376.7" width="24.5" height="28.3" fill="#6cbc81"/>
<rect x="1016.7" y="267.3" width="10.3" height="137.7" fill="#6aab7e"/>
<rect x="1807.3" y="376.7" width="14.5" height="28.3" fill="#6aab7e"/>
<text x="1009" y="407.5" text-anchor="end" font-size="8" fill="#69707d" font-family="Liberation Sans">0</text>
<text x="1009" y="390.3" text-anchor="end" font-size="8" fill="#69707d" font-family="Liberation Sans">20</text>
<text x="1009" y="373.1" text-anchor="end" font-size="8" fill="#69707d" font-family="Liberation Sans">40</text>
<text x="1009" y="355.9" text-anchor="end" font-size="8" fill="#69707d" font-family="Liberation Sans">60</text>
<text x="1009" y="338.7" text-anchor="end" font-size="8" fill="#69707d" font-family="Liberation Sans">80</text>
<text x="1009" y="321.5" text-anchor="end" font-size="8" fill="#69707d" font-family="Liberation Sans">100</text>
<text x="1009" y="304.3" text-anchor="end" font-size="8" fill="#69707d" font-family="Liberation Sans">120</text>
<text x="1009" y="287.1" text-anchor="end" font-size="8" fill="#69707d" font-family="Liberation Sans">140</text>
<text x="1009" y="269.9" text-anchor="end" font-size="8" fill="#69707d" font-family="Liberation Sans">160</text>
<text x="1009" y="252.7" text-anchor="end" font-size="8" fill="#69707d" font-family="Liberation Sans">180</text>
<text x="1009" y="235.5" text-anchor="end" font-size="8" fill="#69707d" font-family="Liberation Sans">200</text>
<text x="1009" y="218.3" text-anchor="end" font-size="8" fill="#69707d" font-family="Liberation Sans">220</text>
<text x="1009" y="201.1" text-anchor="end" font-size="8" fill="#69707d" font-family="Liberation Sans">240</text>
<text x="1009" y="183.9" text-anchor="end" font-size="8" fill="#69707d" font-family="Liberation Sans">260</text>
<text x="1042" y="418.4" text-anchor="middle" font-size="8" fill="#69707d" font-family="Liberation Sans">12:09:00</text>
<text x="1094" y="418.4" text-anchor="middle" font-size="8" fill="#69707d" font-family="Liberation Sans">12:10:00</text>
<text x="1146" y="418.4" text-anchor="middle" font-size="8" fill="#69707d" font-family="Liberation Sans">12:11:00</text>
<text x="1198" y="418.4" text-anchor="middle" font-size="8" fill="#69707d" font-family="Liberation Sans">12:12:00</text>
<text x="1250" y="418.4" text-anchor="middle" font-size="8" fill="#69707d" font-family="Liberation Sans">12:13:00</text>
<text x="1302" y="418.4" text-anchor="middle" font-size="8" fill="#69707d" font-family="Liberation Sans">12:14:00</text>
<text x="1354" y="418.4" text-anchor="middle" font-size="8" fill="#69707d" font-family="Liberation Sans">12:15:00</text>
<text x="1406" y="418.4" text-anchor="middle" font-size="8" fill="#69707d" font-family="Liberation Sans">12:16:00</text>
<text x="1458" y="418.4" text-anchor="middle" font-size="8" fill="#69707d" font-family="Liberation Sans">12:17:00</text>
<text x="1510" y="418.4" text-anchor="middle" font-size="8" fill="#69707d" font-family="Liberation Sans">12:18:00</text>
<text x="1562" y="418.4" text-anchor="middle" font-size="8" fill="#69707d" font-family="Liberation Sans">12:19:00</text>
<text x="1614" y="418.4" text-anchor="middle" font-size="8" fill="#69707d" font-family="Liberation Sans">12:20:00</text>
<text x="1666" y="418.4" text-anchor="middle" font-size="8" fill="#69707d" font-family="Liberation Sans">12:21:00</text>
<text x="1718" y="418.4" text-anchor="middle" font-size="8" fill="#69707d" font-family="Liberation Sans">12:22:00</text>
<text x="1770" y="418.4" text-anchor="middle" font-size="8" fill="#69707d" font-family="Liberation Sans">12:23:00</text>
<text transform="translate(978,288) rotate(-90)" text-anchor="middle" font-size="9" font-weight="bold" fill="#1a1c21" font-family="Liberation Sans">Count</text>
<text x="1419" y="440" text-anchor="middle" font-size="9.2" font-weight="bold" fill="#1a1c21" font-family="Liberation Sans">@timestamp per 30 seconds</text>
<circle cx="1847.7" cy="177.3" r="3" fill="#54b37f"/>
<text x="1857" y="180.5" font-size="9.5" fill="#535966" font-family="Liberation Sans">success</text>
<circle cx="1905" cy="173.5" r="0.9" fill="#69707d"/><circle cx="1905" cy="177" r="0.9" fill="#69707d"/><circle cx="1905" cy="180.5" r="0.9" fill="#69707d"/>
</svg>
<div class="abs" style="left:967px;top:437px;width:17px;height:15px;border-radius:3px;background:#f5f7fa"></div>
<svg class="abs" style="left:971px;top:441px" width="10" height="8" viewBox="0 0 10 8"><path d="M0 1H1.3M3 1H10M0 4H1.3M3 4H10M0 7H1.3M3 7H10" stroke="#69707d" stroke-width="0.9"/></svg>
<svg class="abs" style="left:0;top:0" width="1920" height="960" viewBox="0 0 1920 960">
<path d="M186.00 505.00 A112.00 112.00 0 0 1 295.30 641.43 L264.46 634.54 A80.40 80.40 0 0 0 186.00 536.60 Z" fill="#6f8cd6" stroke="#fff" stroke-width="1.2"/>
<path d="M295.30 641.43 A112.00 112.00 0 0 1 145.13 721.28 L156.66 691.86 A80.40 80.40 0 0 0 264.46 634.54 Z" fill="#6044b0" stroke="#fff" stroke-width="1.2"/>
<path d="M145.13 721.28 A112.00 112.00 0 0 1 75.20 600.64 L106.46 605.25 A80.40 80.40 0 0 0 156.66 691.86 Z" fill="#b45bb9" stroke="#fff" stroke-width="1.2"/>
<path d="M75.20 600.64 A112.00 112.00 0 0 1 106.12 538.50 L128.65 560.65 A80.40 80.40 0 0 0 106.46 605.25 Z" fill="#993b31" stroke="#fff" stroke-width="1.2"/>
<path d="M106.12 538.50 A112.00 112.00 0 0 1 131.19 519.33 L146.65 546.89 A80.40 80.40 0 0 0 128.65 560.65 Z" fill="#d9a063" stroke="#fff" stroke-width="1.2"/>
<path d="M131.19 519.33 A112.00 112.00 0 0 1 154.19 509.61 L163.17 539.91 A80.40 80.40 0 0 0 146.65 546.89 Z" fill="#bea94d" stroke="#fff" stroke-width="1.2"/>
<path d="M154.19 509.61 A112.00 112.00 0 0 1 164.25 507.13 L170.38 538.13 A80.40 80.40 0 0 0 163.17 539.91 Z" fill="#2c50bc" stroke="#fff" stroke-width="1.2"/>
<path d="M164.25 507.13 A112.00 112.00 0 0 1 169.64 506.20 L174.25 537.46 A80.40 80.40 0 0 0 170.38 538.13 Z" fill="#c0523a" stroke="#fff" stroke-width="1.2"/>
<path d="M169.64 506.20 A112.00 112.00 0 0 1 174.10 505.63 L177.46 537.06 A80.40 80.40 0 0 0 174.25 537.46 Z" fill="#3fa9bd" stroke="#fff" stroke-width="1.2"/>
<path d="M174.10 505.63 A112.00 112.00 0 0 1 177.41 505.33 L179.83 536.84 A80.40 80.40 0 0 0 177.46 537.06 Z" fill="#74b747" stroke="#fff" stroke-width="1.2"/>
<path d="M177.41 505.33 A112.00 112.00 0 0 1 180.53 505.13 L182.07 536.70 A80.40 80.40 0 0 0 179.83 536.84 Z" fill="#8f45b8" stroke="#fff" stroke-width="1.2"/>
<path d="M180.53 505.13 A112.00 112.00 0 0 1 183.26 505.03 L184.04 536.62 A80.40 80.40 0 0 0 182.07 536.70 Z" fill="#c94ba9" stroke="#fff" stroke-width="1.2"/>
<path d="M183.26 505.03 A112.00 112.00 0 0 1 186.00 505.00 L186.00 536.60 A80.40 80.40 0 0 0 184.04 536.62 Z" fill="#54b36b" stroke="#fff" stroke-width="1.2"/>
<circle cx="368.8" cy="497.5" r="4.1" fill="#6f8cd6"/>
<text x="377.8" y="500.7" font-size="9.2" fill="#4a4f59" font-family="Liberation Sans">io.k8s.core.v1.confi...</text>
<circle cx="368.8" cy="515.5" r="4.1" fill="#6044b0"/>
<text x="377.8" y="518.7" font-size="9.2" fill="#4a4f59" font-family="Liberation Sans">io.k8s.coordination....</text>
<circle cx="368.8" cy="533.5" r="4.1" fill="#b45bb9"/>
<text x="377.8" y="536.7" font-size="9.2" fill="#4a4f59" font-family="Liberation Sans">io.k8s.core.v1.endp...</text>
<circle cx="368.8" cy="551.6" r="4.1" fill="#993b31"/>
<text x="377.8" y="554.8" font-size="9.2" fill="#4a4f59" font-family="Liberation Sans">io.k8s.authorization....</text>
<circle cx="368.8" cy="569.6" r="4.1" fill="#d9a063"/>
<text x="377.8" y="572.8" font-size="9.2" fill="#4a4f59" font-family="Liberation Sans">io.k8s.coordination....</text>
<circle cx="368.8" cy="587.6" r="4.1" fill="#bea94d"/>
<text x="377.8" y="590.8" font-size="9.2" fill="#4a4f59" font-family="Liberation Sans">io.k8s.migration.v1al...</text>
<circle cx="368.8" cy="605.6" r="4.1" fill="#2c50bc"/>
<text x="377.8" y="608.8" font-size="9.2" fill="#4a4f59" font-family="Liberation Sans">io.k8s.apiextensions...</text>
<circle cx="368.8" cy="623.6" r="4.1" fill="#c0523a"/>
<text x="377.8" y="626.8" font-size="9.2" fill="#4a4f59" font-family="Liberation Sans">io.k8s.apps.v1.daem...</text>
<circle cx="368.8" cy="641.7" r="4.1" fill="#3fa9bd"/>
<text x="377.8" y="644.9" font-size="9.2" fill="#4a4f59" font-family="Liberation Sans">io.k8s.authorization....</text>
<circle cx="368.8" cy="659.7" r="4.1" fill="#74b747"/>
<text x="377.8" y="662.9" font-size="9.2" fill="#4a4f59" font-family="Liberation Sans">io.k8s.authorization....</text>
<circle cx="368.8" cy="677.7" r="4.1" fill="#8f45b8"/>
<text x="377.8" y="680.9" font-size="9.2" fill="#4a4f59" font-family="Liberation Sans">io.k8s.authorization....</text>
<circle cx="368.8" cy="695.7" r="4.1" fill="#c94ba9"/>
<text x="377.8" y="698.9" font-size="9.2" fill="#4a4f59" font-family="Liberation Sans">io.k8s.policy.v1beta...</text>
<circle cx="368.8" cy="713.7" r="4.1" fill="#54b36b"/>
<text x="377.8" y="716.9" font-size="9.2" fill="#4a4f59" font-family="Liberation Sans">io.k8s.core.v1.resou...</text>
</svg>
<svg class="abs" style="left:0;top:0" width="1920" height="960" viewBox="0 0 1920 960">
<text x="612.8" y="522.2" font-size="20.5" textLength="223.4" lengthAdjust="spacingAndGlyphs" fill="#3aa2b6" font-family="Liberation Sans">system:snapshot-controller</text>
<text x="555.6" y="546.2" font-size="23.0" textLength="286.9" lengthAdjust="spacingAndGlyphs" fill="#b0402b" font-family="Liberation Sans">system:storageversionmigrator</text>
<text x="596.3" y="578.4" font-size="33.0" textLength="262.8" lengthAdjust="spacingAndGlyphs" fill="#d7a064" font-family="Liberation Sans">cluster-autoscaler</text>
<text x="530.0" y="604.2" font-size="33.0" textLength="382.2" lengthAdjust="spacingAndGlyphs" fill="#921c17" font-family="Liberation Sans">system:vpa-recommender</text>
<text x="544.7" y="636.9" font-size="33.0" textLength="319.0" lengthAdjust="spacingAndGlyphs" fill="#2a40bf" font-family="Liberation Sans">system:clustermetrics</text>
<text x="533.0" y="670.3" font-size="33.0" textLength="341.4" lengthAdjust="spacingAndGlyphs" fill="#b157bb" font-family="Liberation Sans">system:kube-scheduler</text>
<text x="629.4" y="742.8" font-size="11" textLength="182.5" lengthAdjust="spacingAndGlyphs" font-weight="bold" fill="#1a1c21" font-family="Liberation Sans">user.email: Descending - Count</text>
<path d="M497 722.5 L502.2 731.5 H491.8 Z" fill="none" stroke="#c3894d" stroke-width="1" stroke-linejoin="round"/><path d="M497 725.5 V728.3 M497 729.6 V730.3" stroke="#c3894d" stroke-width="0.9"/>
</svg>
<svg class="abs" style="left:0;top:0" width="1920" height="960" viewBox="0 0 1920 960">
<circle cx="1142.8" cy="617" r="96.2" fill="none" stroke="#9cba50" stroke-width="31.2"/>
<circle cx="1325.6" cy="497.5" r="4.1" fill="#9cba50"/>
<text x="1334.6" y="500.7" font-size="9.2" fill="#4a4f59" font-family="Liberation Sans">Other</text>
</svg>
<svg class="abs" style="left:0;top:0" width="1920" height="960" viewBox="0 0 1920 960">
<path d="M1621.30 505.00 A112.00 112.00 0 0 1 1719.16 562.53 L1691.55 577.90 A80.40 80.40 0 0 0 1621.30 536.60 Z" fill="#4069ba" stroke="#fff" stroke-width="1.2"/>
<path d="M1719.16 562.53 A112.00 112.00 0 0 1 1716.69 675.69 L1689.78 659.13 A80.40 80.40 0 0 0 1691.55 577.90 Z" fill="#bf974a" stroke="#fff" stroke-width="1.2"/>
<path d="M1716.69 675.69 A112.00 112.00 0 0 1 1673.02 716.35 L1658.42 688.32 A80.40 80.40 0 0 0 1689.78 659.13 Z" fill="#b94c79" stroke="#fff" stroke-width="1.2"/>
<path d="M1673.02 716.35 A112.00 112.00 0 0 1 1615.44 728.85 L1617.09 697.29 A80.40 80.40 0 0 0 1658.42 688.32 Z" fill="#8fba50" stroke="#fff" stroke-width="1.2"/>
<path d="M1615.44 728.85 A112.00 112.00 0 0 1 1559.48 710.40 L1576.92 684.04 A80.40 80.40 0 0 0 1617.09 697.29 Z" fill="#7349bf" stroke="#fff" stroke-width="1.2"/>
<path d="M1559.48 710.40 A112.00 112.00 0 0 1 1520.21 665.22 L1548.73 651.61 A80.40 80.40 0 0 0 1576.92 684.04 Z" fill="#5bb88b" stroke="#fff" stroke-width="1.2"/>
<path d="M1520.21 665.22 A112.00 112.00 0 0 1 1509.56 609.38 L1541.09 611.53 A80.40 80.40 0 0 0 1548.73 651.61 Z" fill="#b84746" stroke="#fff" stroke-width="1.2"/>
<path d="M1509.56 609.38 A112.00 112.00 0 0 1 1528.45 554.37 L1554.65 572.04 A80.40 80.40 0 0 0 1541.09 611.53 Z" fill="#5db9b5" stroke="#fff" stroke-width="1.2"/>
<path d="M1528.45 554.37 A112.00 112.00 0 0 1 1548.12 532.22 L1568.76 556.14 A80.40 80.40 0 0 0 1554.65 572.04 Z" fill="#bcbd58" stroke="#fff" stroke-width="1.2"/>
<path d="M1548.12 532.22 A112.00 112.00 0 0 1 1558.19 524.48 L1575.99 550.58 A80.40 80.40 0 0 0 1568.76 556.14 Z" fill="#4a95be" stroke="#fff" stroke-width="1.2"/>
<path d="M1558.19 524.48 A112.00 112.00 0 0 1 1566.66 519.23 L1582.08 546.82 A80.40 80.40 0 0 0 1575.99 550.58 Z" fill="#a64ec8" stroke="#fff" stroke-width="1.2"/>
<path d="M1566.66 519.23 A112.00 112.00 0 0 1 1578.44 513.53 L1590.53 542.72 A80.40 80.40 0 0 0 1582.08 546.82 Z" fill="#3540b5" stroke="#fff" stroke-width="1.2"/>
<path d="M1578.44 513.53 A112.00 112.00 0 0 1 1587.43 510.24 L1596.99 540.36 A80.40 80.40 0 0 0 1590.53 542.72 Z" fill="#c0683e" stroke="#fff" stroke-width="1.2"/>
<path d="M1587.43 510.24 A112.00 112.00 0 0 1 1599.55 507.13 L1605.68 538.13 A80.40 80.40 0 0 0 1596.99 540.36 Z" fill="#6cbd50" stroke="#fff" stroke-width="1.2"/>
<path d="M1599.55 507.13 A112.00 112.00 0 0 1 1602.62 506.57 L1607.89 537.73 A80.40 80.40 0 0 0 1605.68 538.13 Z" fill="#a14fc0" stroke="#fff" stroke-width="1.2"/>
<path d="M1602.62 506.57 A112.00 112.00 0 0 1 1605.33 506.15 L1609.83 537.42 A80.40 80.40 0 0 0 1607.89 537.73 Z" fill="#54b36b" stroke="#fff" stroke-width="1.2"/>
<path d="M1605.33 506.15 A112.00 112.00 0 0 1 1608.04 505.79 L1611.78 537.17 A80.40 80.40 0 0 0 1609.83 537.42 Z" fill="#d9a063" stroke="#fff" stroke-width="1.2"/>
<path d="M1608.04 505.79 A112.00 112.00 0 0 1 1610.76 505.50 L1613.73 536.96 A80.40 80.40 0 0 0 1611.78 537.17 Z" fill="#4069ba" stroke="#fff" stroke-width="1.2"/>
<path d="M1610.76 505.50 A112.00 112.00 0 0 1 1613.49 505.27 L1615.69 536.80 A80.40 80.40 0 0 0 1613.73 536.96 Z" fill="#c94545" stroke="#fff" stroke-width="1.2"/>
<path d="M1613.49 505.27 A112.00 112.00 0 0 1 1616.22 505.12 L1617.65 536.68 A80.40 80.40 0 0 0 1615.69 536.80 Z" fill="#3540b5" stroke="#fff" stroke-width="1.2"/>
<path d="M1616.22 505.12 A112.00 112.00 0 0 1 1618.76 505.03 L1619.48 536.62 A80.40 80.40 0 0 0 1617.65 536.68 Z" fill="#5db9b5" stroke="#fff" stroke-width="1.2"/>
<path d="M1618.76 505.03 A112.00 112.00 0 0 1 1621.30 505.00 L1621.30 536.60 A80.40 80.40 0 0 0 1619.48 536.62 Z" fill="#6cbd50" stroke="#fff" stroke-width="1.2"/>
<circle cx="1804.0" cy="497.5" r="4.1" fill="#4069ba"/>
<text x="1813.0" y="500.7" font-size="9.2" fill="#4a4f59" font-family="Liberation Sans">core/v1/namespa...</text>
<circle cx="1804.0" cy="515.5" r="4.1" fill="#bf974a"/>
<text x="1813.0" y="518.7" font-size="9.2" fill="#4a4f59" font-family="Liberation Sans">core/v1/namespa...</text>
<circle cx="1804.0" cy="533.5" r="4.1" fill="#b94c79"/>
<text x="1813.0" y="536.7" font-size="9.2" fill="#4a4f59" font-family="Liberation Sans">core/v1/namespa...</text>
<circle cx="1804.0" cy="551.6" r="4.1" fill="#8fba50"/>
<text x="1813.0" y="554.8" font-size="9.2" fill="#4a4f59" font-family="Liberation Sans">core/v1/namespa...</text>
<circle cx="1804.0" cy="569.6" r="4.1" fill="#7349bf"/>
<text x="1813.0" y="572.8" font-size="9.2" fill="#4a4f59" font-family="Liberation Sans">coordination.k8s....</text>
<circle cx="1804.0" cy="587.6" r="4.1" fill="#5bb88b"/>
<text x="1813.0" y="590.8" font-size="9.2" fill="#4a4f59" font-family="Liberation Sans">core/v1/namespa...</text>
<circle cx="1804.0" cy="605.6" r="4.1" fill="#b84746"/>
<text x="1813.0" y="608.8" font-size="9.2" fill="#4a4f59" font-family="Liberation Sans">coordination.k8s....</text>
<circle cx="1804.0" cy="623.6" r="4.1" fill="#5db9b5"/>
<text x="1813.0" y="626.8" font-size="9.2" fill="#4a4f59" font-family="Liberation Sans">coordination.k8s....</text>
<circle cx="1804.0" cy="641.7" r="4.1" fill="#bcbd58"/>
<text x="1813.0" y="644.9" font-size="9.2" fill="#4a4f59" font-family="Liberation Sans">coordination.k8s....</text>
<circle cx="1804.0" cy="659.7" r="4.1" fill="#4a95be"/>
<text x="1813.0" y="662.9" font-size="9.2" fill="#4a4f59" font-family="Liberation Sans">coordination.k8s....</text>
<circle cx="1804.0" cy="677.7" r="4.1" fill="#a64ec8"/>
<text x="1813.0" y="680.9" font-size="9.2" fill="#4a4f59" font-family="Liberation Sans">coordination.k8s....</text>
<circle cx="1804.0" cy="695.7" r="4.1" fill="#3540b5"/>
<text x="1813.0" y="698.9" font-size="9.2" fill="#4a4f59" font-family="Liberation Sans">coordination.k8s....</text>
<circle cx="1804.0" cy="713.7" r="4.1" fill="#c0683e"/>
<text x="1813.0" y="716.9" font-size="9.2" fill="#4a4f59" font-family="Liberation Sans">coordination.k8s....</text>
<circle cx="1804.0" cy="731.8" r="4.1" fill="#6cbd50"/>
<text x="1813.0" y="735.0" font-size="9.2" fill="#4a4f59" font-family="Liberation Sans">coordination.k8s....</text>
<rect x="1899.5" y="494" width="3" height="173" rx="1.5" fill="#a3a9b3"/>
</svg>
<svg class="abs" style="left:0;top:0" width="1920" height="960" viewBox="0 0 1920 960">
<text x="31.0" y="818.6" font-size="9.1" font-weight="bold" fill="#1a1c21" font-family="Liberation Sans">Time</text>
<text x="158.5" y="818.6" font-size="9.1" font-weight="bold" fill="#1a1c21" font-family="Liberation Sans">user.email</text>
<text x="667.0" y="818.6" font-size="9.1" font-weight="bold" fill="#1a1c21" font-family="Liberation Sans">service.name</text>
<text x="844.5" y="818.6" font-size="9.1" font-weight="bold" fill="#1a1c21" font-family="Liberation Sans">gcp.audit.type</text>
<text x="1016.0" y="818.6" font-size="9.1" font-weight="bold" fill="#1a1c21" font-family="Liberation Sans">event.action</text>
<text x="1323.5" y="818.6" font-size="9.1" font-weight="bold" fill="#1a1c21" font-family="Liberation Sans">event.outcome</text>
<text x="1512.7" y="818.6" font-size="9.1" font-weight="bold" fill="#1a1c21" font-family="Liberation Sans">source.ip</text>
<text x="1660.8" y="818.6" font-size="9.1" font-weight="bold" fill="#1a1c21" font-family="Liberation Sans">source.geo.region_name</text>
<path d="M56.3 815.2 L58.7 817.8 L61.1 815.2 Z" fill="#1c6ab0"/>
<rect x="7" y="826.7" width="1894" height="1" fill="#d3dae6"/>
<path d="M15 837.6 L18 840.6 L15 843.6" fill="none" stroke="#535966" stroke-width="0.9"/>
<text x="31.0" y="843.9" font-size="9.0" fill="#343741" font-family="Liberation Sans">Apr 1, 2021 @ 12:23:37.494</text>
<text x="158.5" y="843.9" font-size="9.4" fill="#343741" font-family="Liberation Sans">system:managed-certificate-controller</text>
<text x="667.0" y="843.9" font-size="9.4" fill="#343741" font-family="Liberation Sans">k8s.io</text>
<text x="1016.0" y="843.9" font-size="9.4" fill="#343741" font-family="Liberation Sans">io.k8s.core.v1.endpoints.update</text>
<text x="1323.5" y="843.9" font-size="9.4" fill="#343741" font-family="Liberation Sans">success</text>
<text x="1512.7" y="843.9" font-size="9.0" fill="#343741" font-family="Liberation Sans">::1</text>
<text x="1660.8" y="843.9" font-size="9.4" fill="#343741" font-family="Liberation Sans">-</text>
<rect x="7" y="856.2" width="1894" height="1" fill="#e3e8f0"/>
<path d="M15 866.1 L18 869.1 L15 872.1" fill="none" stroke="#535966" stroke-width="0.9"/>
<text x="31.0" y="872.4" font-size="9.0" fill="#343741" font-family="Liberation Sans">Apr 1, 2021 @ 12:23:35.855</text>
<text x="158.5" y="872.4" font-size="9.4" fill="#343741" font-family="Liberation Sans">system:kube-controller-manager</text>
<text x="667.0" y="872.4" font-size="9.4" fill="#343741" font-family="Liberation Sans">k8s.io</text>
<text x="1016.0" y="872.4" font-size="9.4" fill="#343741" font-family="Liberation Sans">io.k8s.coordination.v1.leases.update</text>
<text x="1323.5" y="872.4" font-size="9.4" fill="#343741" font-family="Liberation Sans">success</text>
<text x="1512.7" y="872.4" font-size="9.0" fill="#343741" font-family="Liberation Sans">::1</text>
<text x="1660.8" y="872.4" font-size="9.4" fill="#343741" font-family="Liberation Sans">-</text>
<rect x="7" y="884.7" width="1894" height="1" fill="#e3e8f0"/>
<path d="M15 894.5 L18 897.5 L15 900.5" fill="none" stroke="#535966" stroke-width="0.9"/>
<text x="31.0" y="900.8" font-size="9.0" fill="#343741" font-family="Liberation Sans">Apr 1, 2021 @ 12:23:35.500</text>
<text x="158.5" y="900.8" font-size="9.4" fill="#343741" font-family="Liberation Sans">system:node:gke-mbeats-kubernetes-n--default-pool-74cd1ef0-qzea</text>
<text x="667.0" y="900.8" font-size="9.4" fill="#343741" font-family="Liberation Sans">k8s.io</text>
<text x="1016.0" y="900.8" font-size="9.4" fill="#343741" font-family="Liberation Sans">io.k8s.coordination.v1beta1.leases.update</text>
<text x="1323.5" y="900.8" font-size="9.4" fill="#343741" font-family="Liberation Sans">success</text>
<text x="1512.7" y="900.8" font-size="9.0" fill="#343741" font-family="Liberation Sans">34.71.98.140</text>
<text x="1660.8" y="900.8" font-size="9.4" fill="#343741" font-family="Liberation Sans">-</text>
<rect x="7" y="913.1" width="1894" height="1" fill="#e3e8f0"/>
<path d="M15 923.0 L18 926.0 L15 929.0" fill="none" stroke="#535966" stroke-width="0.9"/>
<text x="31.0" y="929.2" font-size="9.0" fill="#343741" font-family="Liberation Sans">Apr 1, 2021 @ 12:23:35.486</text>
<text x="158.5" y="929.2" font-size="9.4" fill="#343741" font-family="Liberation Sans">system:managed-certificate-controller</text>
<text x="667.0" y="929.2" font-size="9.4" fill="#343741" font-family="Liberation Sans">k8s.io</text>
<text x="1016.0" y="929.2" font-size="9.4" fill="#343741" font-family="Liberation Sans">io.k8s.core.v1.endpoints.update</text>
<text x="1323.5" y="929.2" font-size="9.4" fill="#343741" font-family="Liberation Sans">success</text>
<text x="1512.7" y="929.2" font-size="9.0" fill="#343741" font-family="Liberation Sans">::1</text>
<text x="1660.8" y="929.2" font-size="9.4" fill="#343741" font-family="Liberation Sans">-</text>
<text x="1834.4" y="795" font-size="12" text-anchor="end" fill="#69707d" font-family="Liberation Sans">1–50 of 6189</text>
<rect x="1842.4" y="780" width="26.3" height="22" rx="3" fill="#f7f8fb"/>
<rect x="1872.4" y="780" width="25.4" height="22" rx="3" fill="#eef1f6"/>
<path d="M1858 786.5 L1854 791 L1858 795.5" fill="none" stroke="#98a2b3" stroke-width="1.4"/>
<path d="M1883 786.5 L1887 791 L1883 795.5" fill="none" stroke="#1a1c21" stroke-width="1.6"/>
<rect x="1906" y="781.4" width="2.8" height="9.2" fill="#98a2b3"/>
</svg>
<div class="abs" style="left:520px;top:948px;width:880px;height:40px;border-radius:40%;background:rgba(110,115,125,.18);filter:blur(8px)"></div>
</body></html>
